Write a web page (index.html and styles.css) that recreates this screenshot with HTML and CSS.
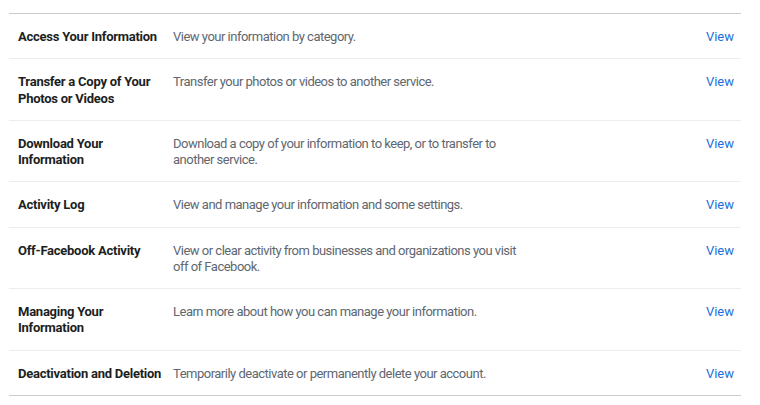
FILE: index.html
```html
<!DOCTYPE html>
<html lang="en">
<head>
    <meta charset="UTF-8">
    <meta name="viewport" content="width=device-width, initial-scale=1.0">
    <title>Your Facebook Information</title>
    <link rel="stylesheet" href="styles.css">
</head>
<body>
    <div class="info-list">
        <div class="info-row">
            <div class="info-title">Access Your Information</div>
            <div class="info-desc">View your information by category.</div>
            <a href="#" class="info-link">View</a>
        </div>
        <div class="info-row">
            <div class="info-title">Transfer a Copy of Your Photos or Videos</div>
            <div class="info-desc">Transfer your photos or videos to another service.</div>
            <a href="#" class="info-link">View</a>
        </div>
        <div class="info-row">
            <div class="info-title">Download Your Information</div>
            <div class="info-desc">Download a copy of your information to keep, or to transfer to another service.</div>
            <a href="#" class="info-link">View</a>
        </div>
        <div class="info-row">
            <div class="info-title">Activity Log</div>
            <div class="info-desc">View and manage your information and some settings.</div>
            <a href="#" class="info-link">View</a>
        </div>
        <div class="info-row">
            <div class="info-title">Off-Facebook Activity</div>
            <div class="info-desc">View or clear activity from businesses and organizations you visit off of Facebook.</div>
            <a href="#" class="info-link">View</a>
        </div>
        <div class="info-row">
            <div class="info-title">Managing Your Information</div>
            <div class="info-desc">Learn more about how you can manage your information.</div>
            <a href="#" class="info-link">View</a>
        </div>
        <div class="info-row">
            <div class="info-title nowrap">Deactivation and Deletion</div>
            <div class="info-desc">Temporarily deactivate or permanently delete your account.</div>
            <a href="#" class="info-link">View</a>
        </div>
    </div>
</body>
</html>
```

FILE: styles.css
```css
body {
    font-family: Roboto, "Liberation Sans", Arial, sans-serif;
    font-size: 13px;
    line-height: 16.25px;
    margin: 0;
    padding: 13px 19px 0 9px;
    background-color: #fff;
}
.info-list {
    border-top: 1px solid #c9ccd1;
    border-bottom: 1px solid #c9ccd1;
}
.info-row {
    display: grid;
    grid-template-columns: 147px 1fr auto;
    column-gap: 8px;
    padding: 15px 7px 13px 9px;
    border-top: 1px solid #ebedf0;
}
.info-row:first-child {
    border-top: none;
}
.info-title {
    font-weight: bold;
    color: #1c1e21;
    letter-spacing: -0.25px;
}
.nowrap {
    white-space: nowrap;
}
.info-desc {
    color: #606770;
    letter-spacing: -0.5px;
    max-width: 350px;
}
.info-link {
    color: #216fdb;
    text-decoration: none;
}
```
